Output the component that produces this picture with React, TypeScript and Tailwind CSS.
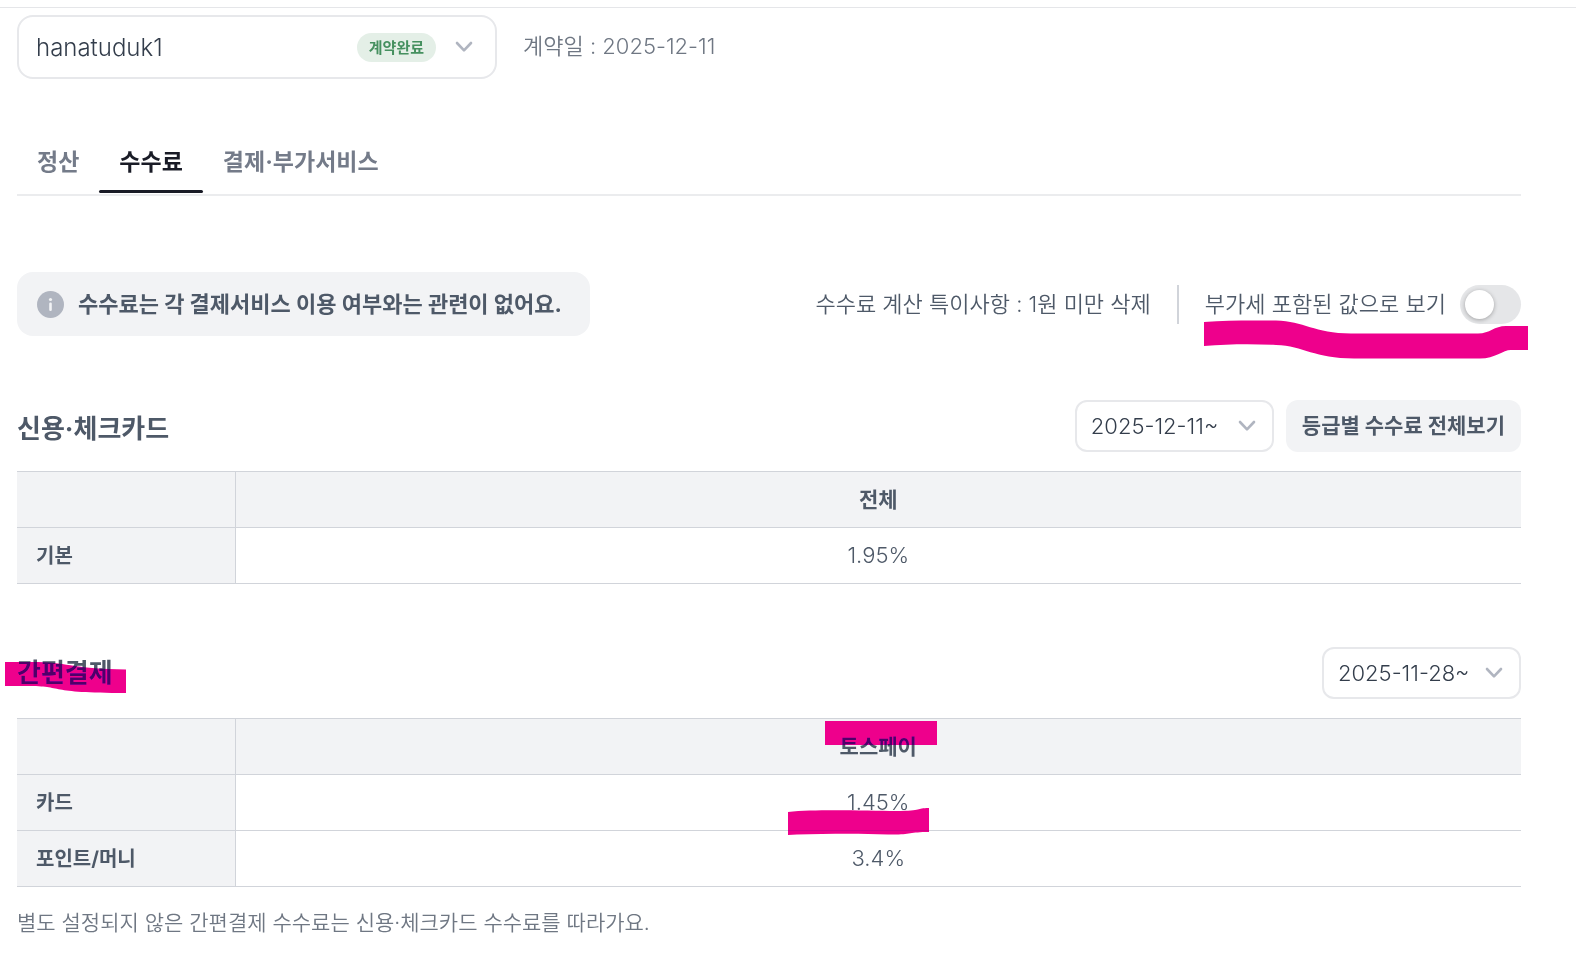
import React from "react";

type FeeRow = {
  name: string;
  rate: string;
  mark?: React.ReactNode;
};

type FeeTableProps = {
  column: string;
  columnMark?: React.ReactNode;
  rows: FeeRow[];
};

type DateSelectProps = {
  label: string;
  value: string;
};

const tabs = ["정산", "수수료", "결제·부가서비스"];

const cardFees: FeeRow[] = [{ name: "기본", rate: "1.95%" }];

const Chevron = ({ className }: { className: string }) => (
  <svg
    className={className}
    viewBox="0 0 18 12"
    fill="none"
    stroke="#b0b5c0"
    strokeWidth="2.6"
    strokeLinecap="round"
    strokeLinejoin="round"
    aria-hidden="true"
  >
    <path d="M2 2l7 7.4L16 2" />
  </svg>
);

// highlighter stroke laid over the text
const Marker = ({
  d,
  width,
  height,
  className,
}: {
  d: string;
  width: number;
  height: number;
  className: string;
}) => (
  <svg
    className={`pointer-events-none absolute max-w-none mix-blend-darken ${className}`}
    width={width}
    height={height}
    viewBox={`0 0 ${width} ${height}`}
    aria-hidden="true"
  >
    <path d={d} fill="#ee008c" />
  </svg>
);

const DateSelect = ({ label, value }: DateSelectProps) => (
  <div className="relative">
    <select
      aria-label={label}
      className="h-[52px] w-[199px] appearance-none rounded-xl border-2 border-[#e7e8eb] bg-white pl-[14px] text-[22px] font-[350] text-[#333d4b]"
    >
      <option>{value}</option>
    </select>
    <Chevron className="pointer-events-none absolute top-5 right-[18px] h-3 w-[18px]" />
  </div>
);

const FeeTable = ({ column, columnMark, rows }: FeeTableProps) => (
  <table className="mt-[19px] w-full table-fixed border-collapse text-[#4e5968]">
    <thead>
      <tr className="h-14 border-y border-[#d1d4da] bg-[#f2f3f5]">
        <td className="w-[218px] border-r border-[#d1d4da]" />
        <th scope="col" className="p-0 text-[21px] leading-8 font-bold">
          <span className="relative">
            {column}
            {columnMark}
          </span>
        </th>
      </tr>
    </thead>
    <tbody>
      {rows.map((row) => (
        <tr key={row.name} className="h-14 border-b border-[#d1d4da]">
          <th
            scope="row"
            className="border-r border-[#d1d4da] bg-[#f2f3f5] py-0 pl-[19px] text-left text-[20px] leading-8 font-bold"
          >
            {row.name}
          </th>
          <td className="px-0 pt-0 pb-[2px] text-center text-[22px] leading-8 font-[350]">
            <span className="relative">
              {row.rate}
              {row.mark}
            </span>
          </td>
        </tr>
      ))}
    </tbody>
  </table>
);

const App = () => {
  const payFees: FeeRow[] = [
    {
      name: "카드",
      rate: "1.45%",
      mark: (
        <Marker
          className="top-[19px] -left-[59px]"
          width={141}
          height={28}
          d="M0 4C30 1 80 3 108 3S127 0 141 0V24C120 24 123 27 100 26.500C65 25 35 26 9 26.500L0 27Z"
        />
      ),
    },
    { name: "포인트/머니", rate: "3.4%" },
  ];

  return (
    <div className="min-h-screen bg-white font-[Inter,'Noto_Sans_CJK_KR',sans-serif] text-[#4e5968]">
      <div className="h-2 border-b border-[#e5e6e9]" />
      <main className="pt-[7px] pr-[55px] pb-6 pl-[17px]">
        <div className="flex items-center gap-[26px]">
          <div className="relative w-[480px]">
            <select
              aria-label="상점"
              className="h-16 w-full appearance-none rounded-2xl border-2 border-[#e7e8eb] bg-white pt-[2px] pl-[17px] text-[24px] font-[350] text-[#333d4b]"
            >
              <option>hanatuduk1</option>
            </select>
            <div className="pointer-events-none absolute inset-y-0 right-6 flex items-center gap-[19px]">
              <span className="rounded-full bg-[#e4efe7] px-3 text-[15px] leading-[29px] font-bold text-[#45905f]">
                계약완료
              </span>
              <Chevron className="h-3 w-[18px]" />
            </div>
          </div>
          <p className="pb-[2px] text-[22px] leading-8 font-[350] text-[#6f7783]">
            계약일 : 2025-12-11
          </p>
        </div>

        <nav className="mt-14 flex border-b-2 border-[#ebecee] pb-px">
          {tabs.map((tab) => (
            <button
              key={tab}
              type="button"
              className={
                tab === "수수료"
                  ? "relative h-[58px] px-5 pb-[3px] text-[23px] font-bold text-[#191b26] after:absolute after:inset-x-0 after:bottom-0 after:h-[3px] after:rounded-full after:bg-[#191b26]"
                  : "h-[58px] px-5 pb-[3px] text-[23px] font-bold text-[#747b89]"
              }
            >
              {tab}
            </button>
          ))}
        </nav>

        <div className="mt-[76px] flex items-center justify-between">
          <div className="flex h-16 items-center gap-[14px] rounded-2xl bg-[#f2f3f5] pr-7 pl-5">
            <svg width="27" height="27" viewBox="0 0 27 27" aria-hidden="true">
              <circle cx="13.5" cy="13.500" r="13.5" fill="#b0b5c0" />
              <circle cx="13.5" cy="8.500" r="1.6" fill="#f2f3f5" />
              <rect x="12.2" y="11.500" width="2.6" height="8.500" rx="1.2" fill="#f2f3f5" />
            </svg>
            <p className="text-[22px] font-bold">
              수수료는 각 결제서비스 이용 여부와는 관련이 없어요.
            </p>
          </div>
          <div className="flex items-center text-[22px] font-[350]">
            <p>수수료 계산 특이사항 : 1원 미만 삭제</p>
            <div className="mx-[26px] h-[39px] w-[2px] bg-[#d1d4da]" />
            <div className="relative flex items-center gap-[14px]">
              <label htmlFor="vat">부가세 포함된 값으로 보기</label>
              <input
                id="vat"
                type="checkbox"
                className="relative h-[39px] w-[61px] appearance-none rounded-full bg-[#e5e6e8] before:absolute before:top-[5px] before:left-[5px] before:size-[29px] before:rounded-full before:bg-white before:shadow-[0_1px_4px_rgba(0,0,0,0.3)] checked:bg-[#3182f6] checked:before:left-[27px]"
              />
              <Marker
                className="top-[35px] -right-[7px]"
                width={324}
                height={39}
                d="M0 2C25 0 50 .5 72 .5C100 1 110 13.500 147 13.500H274C286 13.500 290 6 302 6H324V30H308C300 29 292 38.500 276 38.500H150C110 38.500 100 26 72 25C50 24 25 24 0 26Z"
              />
            </div>
          </div>
        </div>

        <section className="mt-16">
          <div className="flex items-end justify-between">
            <h2 className="text-[26px] leading-[46px] font-bold">신용·체크카드</h2>
            <div className="flex gap-3">
              <DateSelect label="신용·체크카드 적용일" value="2025-12-11~" />
              <button
                type="button"
                className="h-[52px] rounded-xl bg-[#f2f3f5] px-4 text-[21px] font-bold"
              >
                등급별 수수료 전체보기
              </button>
            </div>
          </div>
          <FeeTable column="전체" rows={cardFees} />
        </section>

        <section className="mt-[63px]">
          <div className="flex items-center justify-between">
            <h2 className="relative text-[26px] leading-[46px] font-bold">
              간편결제
              <Marker
                className="top-3 -left-3"
                width={121}
                height={32}
                d="M0 0H33C65 1 70 7 121 7.500V31C40 31 60 24 22 24H0Z"
              />
            </h2>
            <DateSelect label="간편결제 적용일" value="2025-11-28~" />
          </div>
          <FeeTable
            column="토스페이"
            columnMark={
              <Marker
                className="-top-[13px] -left-[15px]"
                width={112}
                height={24}
                d="M0 0H112V24H0Z"
              />
            }
            rows={payFees}
          />
          <p className="mt-5 text-[21px] leading-8 font-[350] text-[#6f7783]">
            별도 설정되지 않은 간편결제 수수료는 신용·체크카드 수수료를 따라가요.
          </p>
        </section>
      </main>
    </div>
  );
};

export default App;
